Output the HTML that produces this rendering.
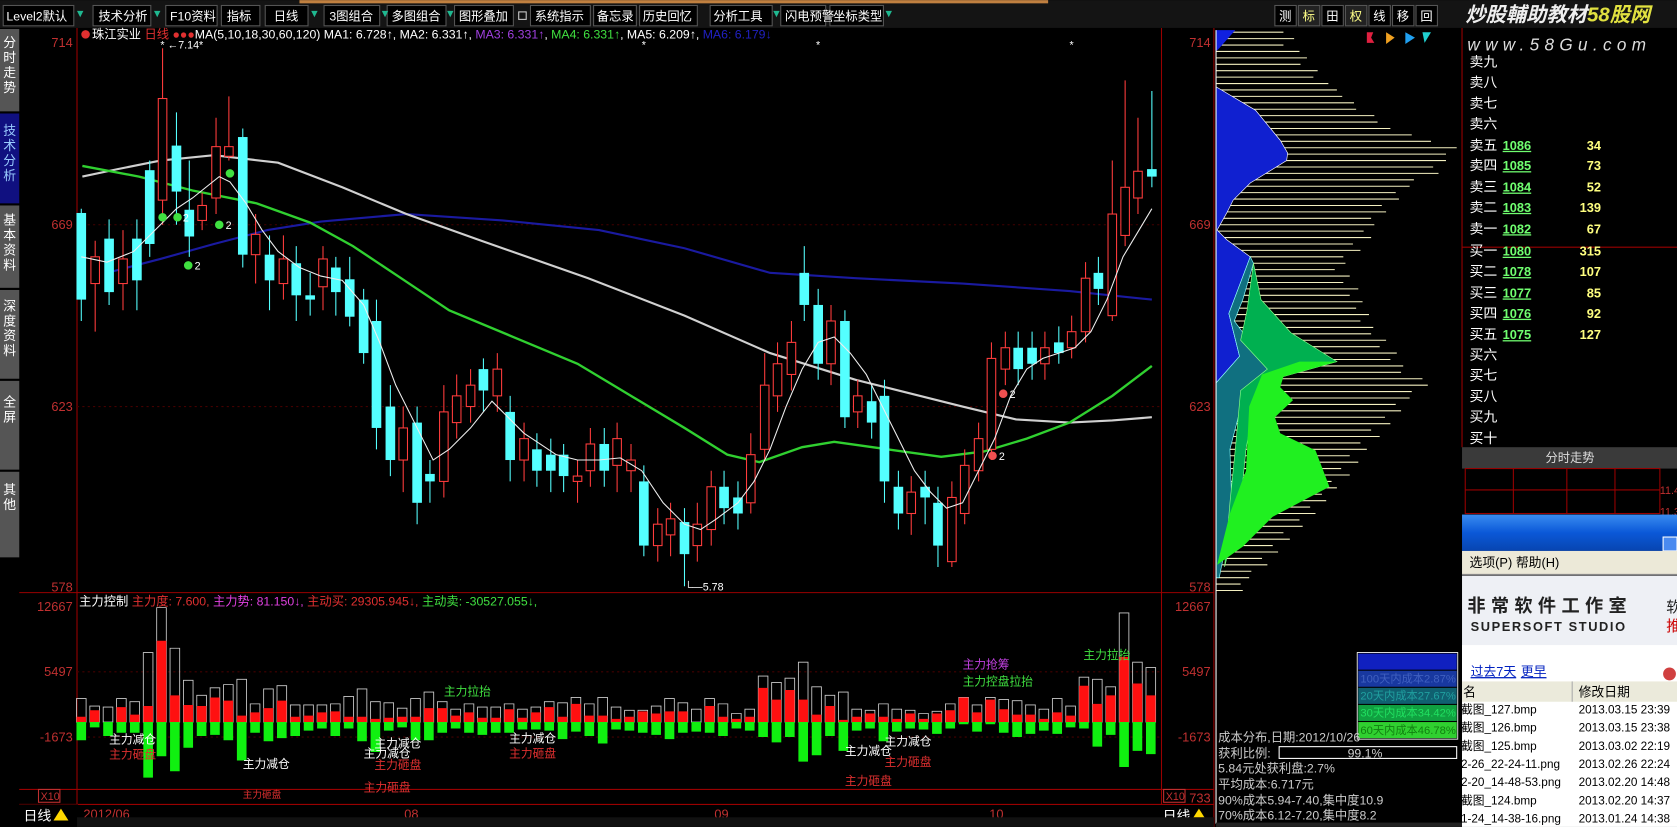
<!DOCTYPE html>
<html><head><meta charset="utf-8"><style>
html,body{margin:0;padding:0;background:#000;overflow:hidden}
svg{display:block}
text{font-family:"Liberation Sans","Noto Sans CJK SC",sans-serif}
.c{fill:#54ffff}.r{fill:#000;stroke:#ff3c3c;stroke-width:1}
.vo{fill:none;stroke:#ccc;stroke-width:0.8}.vr{fill:#ff1010}.vg{fill:#10f010}
</style></head><body>
<svg width="1677" height="827" viewBox="0 0 1568 773" xmlns="http://www.w3.org/2000/svg">
<rect width="1568" height="773" fill="#000"/>
<!-- toolbar -->
<rect x="0" y="0" width="1568" height="26" fill="#141414"/>
<rect x="280" y="0" width="700" height="3" fill="#c08040"/>
<g fill="#000" stroke="#555" stroke-width="1">
<rect x="3" y="5" width="66" height="19"/><rect x="87" y="5" width="54" height="19"/><rect x="155" y="5" width="48" height="19"/>
<rect x="207" y="5" width="36" height="19"/><rect x="248" y="5" width="40" height="19"/><rect x="303" y="5" width="52" height="19"/>
<rect x="362" y="5" width="55" height="19"/><rect x="425" y="5" width="55" height="19"/><rect x="496" y="5" width="56" height="19"/>
<rect x="555" y="5" width="40" height="19"/><rect x="598" y="5" width="54" height="19"/><rect x="664" y="5" width="58" height="19"/>
<rect x="730" y="5" width="42" height="19"/><rect x="776" y="5" width="50" height="19"/>
<rect x="1192" y="5" width="20" height="19"/><rect x="1214" y="5" width="20" height="19" fill="#222"/><rect x="1236" y="5" width="20" height="19"/><rect x="1258" y="5" width="20" height="19" fill="#222"/><rect x="1280" y="5" width="20" height="19"/><rect x="1302" y="5" width="20" height="19"/><rect x="1324" y="5" width="20" height="19"/>
</g>
<g fill="#1fb890"><path d="M72 10h6l-3 6z"/><path d="M144 10h6l-3 6z"/><path d="M291 10h6l-3 6z"/><path d="M357 10h6l-3 6z"/><path d="M418 10h6l-3 6z"/><path d="M723 10h6l-3 6z"/><path d="M828 10h6l-3 6z"/></g>
<g fill="#fff" font-size="11.5">
<text x="6" y="19">Level2默认</text><text x="92" y="19">技术分析</text><text x="159" y="19">F10资料</text><text x="212" y="19">指标</text>
<text x="256" y="19">日线</text><text x="308" y="19">3图组合</text><text x="366" y="19">多图组合</text><text x="429" y="19">图形叠加</text>
<text x="500" y="19">系统指示</text><text x="558" y="19">备忘录</text><text x="601" y="19">历史回忆</text>
<text x="667" y="19">分析工具</text><text x="734" y="19">闪电预警</text><text x="779" y="19">坐标类型</text>
<text x="1196" y="19">测</text><text x="1218" y="19" fill="#ff8">标</text><text x="1240" y="19">田</text><text x="1262" y="19" fill="#ff8">权</text><text x="1284" y="19">线</text><text x="1306" y="19">移</text><text x="1328" y="19">回</text>
</g>
<rect x="485" y="11" width="7" height="7" fill="none" stroke="#ccc"/>
<!-- left tabs -->
<g font-size="12" fill="#fff" text-anchor="middle">
<rect x="0" y="27" width="18" height="77" fill="#555"/><rect x="0" y="106" width="18" height="84" fill="#101080"/><rect x="0" y="192" width="18" height="77" fill="#555"/><rect x="0" y="271" width="18" height="83" fill="#555"/><rect x="0" y="356" width="18" height="83" fill="#555"/><rect x="0" y="441" width="18" height="80" fill="#555"/>
<text x="9" y="44">分</text><text x="9" y="58">时</text><text x="9" y="72">走</text><text x="9" y="86">势</text>
<text x="9" y="126" fill="#9cf">技</text><text x="9" y="140" fill="#9cf">术</text><text x="9" y="154" fill="#9cf">分</text><text x="9" y="168" fill="#9cf">析</text>
<text x="9" y="210">基</text><text x="9" y="224">本</text><text x="9" y="238">资</text><text x="9" y="252">料</text>
<text x="9" y="290">深</text><text x="9" y="304">度</text><text x="9" y="318">资</text><text x="9" y="332">料</text>
<text x="9" y="380">全</text><text x="9" y="394">屏</text>
<text x="9" y="462">其</text><text x="9" y="476">他</text>
</g>
<!-- frame lines -->
<g stroke="#900" stroke-width="1" fill="none">
<line x1="72" y1="26" x2="72" y2="752"/><line x1="1086" y1="26" x2="1086" y2="752"/><line x1="1135" y1="26" x2="1135" y2="773"/>
<line x1="18" y1="554" x2="1135" y2="554"/><line x1="18" y1="738" x2="1135" y2="738"/><line x1="18" y1="752" x2="1135" y2="752"/>
<line x1="1367" y1="26" x2="1367" y2="418"/><line x1="1367" y1="231" x2="1568" y2="231"/>
</g>
<g stroke="#400" stroke-dasharray="2 3"><line x1="72" y1="210" x2="1086" y2="210"/><line x1="72" y1="380" x2="1086" y2="380"/><line x1="72" y1="628" x2="1086" y2="628"/><line x1="72" y1="689" x2="1086" y2="689"/></g>
<g fill="#c03030" font-size="12" text-anchor="end">
<text x="68" y="44">714</text><text x="68" y="214">669</text><text x="68" y="384">623</text><text x="68" y="553">578</text>
<text x="68" y="571">12667</text><text x="68" y="632">5497</text><text x="68" y="693">-1673</text>
<text x="1132" y="44">714</text><text x="1132" y="214">669</text><text x="1132" y="384">623</text><text x="1132" y="553">578</text>
<text x="1132" y="571">12667</text><text x="1132" y="632">5497</text><text x="1132" y="693">-1673</text><text x="1132" y="750">733</text>
</g>
<rect x="36" y="738" width="20" height="12" fill="none" stroke="#c03030"/><text x="38" y="748" font-size="10" fill="#c03030">X10</text>
<rect x="1088" y="738" width="20" height="12" fill="none" stroke="#c03030"/><text x="1090" y="748" font-size="10" fill="#c03030">X10</text>
<!-- info line -->
<text x="86" y="36" font-size="11.5" fill="#fff">珠江实业 <tspan fill="#e03030">日线</tspan> <tspan fill="#e03030">●●●</tspan>MA(5,10,18,30,60,120) MA1: 6.728↑, MA2: 6.331↑, <tspan fill="#a040e0">MA3: 6.331↑</tspan>, <tspan fill="#40e040">MA4: 6.331↑</tspan>, MA5: 6.209↑, <tspan fill="#2020c0">MA6: 6.179↓</tspan></text>
<circle cx="80" cy="32" r="4" fill="#e03030"/>
<text x="150" y="45" font-size="10" fill="#fff">*  ←7.14*</text>
<text x="600" y="45" font-size="10" fill="#fff">*</text><text x="763" y="45" font-size="10" fill="#fff">*</text><text x="1000" y="45" font-size="10" fill="#fff">*</text>
<text x="640" y="552" font-size="10" fill="#fff">└—5.78</text>

<!-- MA lines -->
<g fill="none">
<polyline stroke="#1a1aa0" stroke-width="2" points="100,255 150,242 200,228 250,215 300,207 380,200 470,206 560,215 640,232 720,255 800,260 900,265 1000,272 1077,280"/>
<polyline stroke="#d0d0d0" stroke-width="2" points="77,165 110,158 150,150 200,145 260,152 320,175 380,200 450,225 550,260 640,295 720,330 800,355 900,380 950,392 1000,395 1040,393 1077,390"/>
<polyline stroke="#30d030" stroke-width="2.2" points="77,155 130,165 180,178 240,190 290,208 330,230 375,260 420,290 480,315 540,340 590,370 640,400 680,425 710,432 750,418 780,413 830,420 880,427 920,422 960,410 1000,395 1040,370 1077,342"/>
</g>
<!-- wicks -->
<path stroke="#54ffff" stroke-width="1" fill="none" d="M76 195V300M102 205V285M128 205V290M140 150V240M165 105V210M177 150V240M227 120V250M252 220V290M277 230V300M290 255V295M314 240V295M327 240V305M340 270V340M352 280V420M365 360V445M390 380V490M402 430V470M452 335V385M477 370V450M502 405V455M515 410V460M527 415V460M565 400V455M602 435V520M640 475V548M677 440V490M690 450V495M752 230V300M765 270V355M790 290V400M815 360V410M827 355V470M840 440V495M865 440V490M877 455V530M952 310V360M965 310V355M990 305V340M1027 240V285M1077 85V175"/>
<path stroke="#ff3c3c" stroke-width="1" fill="none" d="M89 225V310M115 215V290M152 45V210M189 180V215M202 110V200M214 90V150M239 200V265M265 220V280M302 230V290M377 380V460M415 360V465M427 350V410M440 345V395M465 330V385M490 395V450M540 430V470M552 400V455M577 395V460M590 415V460M615 475V525M627 470V520M652 470V525M665 440V510M702 405V480M715 330V430M727 320V385M740 300V365M777 285V360M802 355V400M852 445V500M890 450V530M902 420V490M915 395V450M927 320V430M940 310V360M977 310V355M1002 295V335M1015 245V320M1040 150V300M1052 75V230M1064 110V200"/>
<!-- cyan bodies -->
<g class="c">
<rect x="71.5" y="199" width="9" height="81"/><rect x="97.5" y="223" width="9" height="50"/><rect x="123.5" y="223" width="9" height="39"/><rect x="135.5" y="159" width="9" height="69"/><rect x="160.5" y="136" width="9" height="43"/><rect x="172.5" y="196" width="9" height="25"/><rect x="222.5" y="128" width="9" height="110"/><rect x="247.5" y="238" width="9" height="24"/><rect x="272.5" y="246" width="9" height="30"/><rect x="285.5" y="276" width="9" height="4"/><rect x="309.5" y="250" width="9" height="23"/><rect x="322.5" y="261" width="9" height="35"/><rect x="335.5" y="280" width="9" height="50"/><rect x="347.5" y="300" width="9" height="100"/><rect x="360.5" y="380" width="9" height="50"/><rect x="385.5" y="395" width="9" height="75"/><rect x="397.5" y="443" width="9" height="7"/><rect x="447.5" y="345" width="9" height="20"/><rect x="472.5" y="385" width="9" height="45"/><rect x="497.5" y="420" width="9" height="20"/><rect x="510.5" y="425" width="9" height="15"/><rect x="522.5" y="425" width="9" height="20"/><rect x="560.5" y="415" width="9" height="25"/><rect x="597.5" y="450" width="9" height="60"/><rect x="635.5" y="488" width="9" height="30"/><rect x="672.5" y="455" width="9" height="20"/><rect x="685.5" y="465" width="9" height="15"/><rect x="747.5" y="255" width="9" height="30"/><rect x="760.5" y="285" width="9" height="55"/><rect x="785.5" y="300" width="9" height="90"/><rect x="810.5" y="375" width="9" height="20"/><rect x="822.5" y="370" width="9" height="80"/><rect x="835.5" y="455" width="9" height="25"/><rect x="860.5" y="455" width="9" height="10"/><rect x="872.5" y="470" width="9" height="40"/><rect x="947.5" y="325" width="9" height="20"/><rect x="960.5" y="325" width="9" height="15"/><rect x="985.5" y="320" width="9" height="10"/><rect x="1022.5" y="255" width="9" height="15"/><rect x="1072.5" y="158" width="9" height="7"/>
</g>
<!-- red hollow bodies -->
<g class="r">
<rect x="85" y="240" width="8" height="25"/><rect x="111" y="242" width="8" height="23"/><rect x="148" y="92" width="8" height="95"/><rect x="185" y="192" width="8" height="14"/><rect x="198" y="137" width="8" height="48"/><rect x="210" y="137" width="8" height="9"/><rect x="235" y="219" width="8" height="19"/><rect x="261" y="242" width="8" height="23"/><rect x="298" y="242" width="8" height="26"/><rect x="373" y="400" width="8" height="30"/><rect x="411" y="385" width="8" height="65"/><rect x="423" y="370" width="8" height="25"/><rect x="436" y="360" width="8" height="20"/><rect x="461" y="345" width="8" height="25"/><rect x="486" y="410" width="8" height="20"/><rect x="536" y="445" width="8" height="5"/><rect x="548" y="415" width="8" height="25"/><rect x="573" y="410" width="8" height="25"/><rect x="586" y="430" width="8" height="10"/><rect x="611" y="490" width="8" height="20"/><rect x="623" y="485" width="8" height="15"/><rect x="648" y="490" width="8" height="20"/><rect x="661" y="455" width="8" height="40"/><rect x="698" y="425" width="8" height="45"/><rect x="711" y="360" width="8" height="60"/><rect x="723" y="340" width="8" height="30"/><rect x="736" y="320" width="8" height="30"/><rect x="773" y="300" width="8" height="40"/><rect x="798" y="370" width="8" height="15"/><rect x="848" y="460" width="8" height="20"/><rect x="886" y="465" width="8" height="60"/><rect x="898" y="435" width="8" height="45"/><rect x="911" y="410" width="8" height="30"/><rect x="923" y="335" width="8" height="85"/><rect x="936" y="325" width="8" height="20"/><rect x="973" y="325" width="8" height="15"/><rect x="998" y="310" width="8" height="15"/><rect x="1011" y="260" width="8" height="50"/><rect x="1036" y="200" width="8" height="95"/><rect x="1048" y="175" width="8" height="45"/><rect x="1060" y="160" width="8" height="25"/>
</g>
<!-- MA5 white -->
<polyline fill="none" stroke="#eee" stroke-width="1" points="76,240 100,245 125,235 150,210 165,195 180,185 205,165 215,170 230,190 245,215 260,235 280,250 300,258 320,262 340,285 355,320 370,360 390,400 405,430 420,420 440,400 460,375 475,390 490,405 505,415 520,425 540,430 560,430 580,428 600,440 620,470 640,490 655,495 670,485 690,470 705,450 720,420 735,380 750,345 765,320 780,315 795,330 810,350 825,380 840,410 855,440 870,460 885,475 900,470 915,440 930,410 945,370 960,345 975,335 990,330 1005,325 1020,310 1035,280 1050,240 1065,215 1077,195"/>
<g font-size="10" fill="#fff">
<circle cx="152" cy="203" r="4" fill="#40e040"/><circle cx="166" cy="203" r="4" fill="#40e040"/><text x="171" y="207">2</text>
<circle cx="176" cy="248" r="4" fill="#40e040"/><text x="182" y="252">2</text>
<circle cx="205" cy="210" r="4" fill="#40e040"/><text x="211" y="214">2</text>
<circle cx="215" cy="162" r="4" fill="#40e040"/>
<circle cx="938" cy="368" r="4" fill="#f05050"/><text x="944" y="372">2</text>
<circle cx="928" cy="426" r="4" fill="#f05050"/><text x="934" y="430">2</text>
</g>

<!-- volume header -->
<text x="74" y="566" font-size="11.5" fill="#fff">主力控制 <tspan fill="#e03030">主力度: 7.600,</tspan> <tspan fill="#e040e0">主力势: 81.150↓,</tspan> <tspan fill="#e03030">主动买: 29305.945↓,</tspan> <tspan fill="#40e040">主动卖: -30527.055↓,</tspan></text>
<!-- volume bars: outlines -->
<path class="vo" d="M71.5 653h9v22h-9zM84 660h9v15h-9zM96.5 661h9v14h-9zM109 653h9v22h-9zM121.5 656h9v19h-9zM134 610h9v65h-9zM146.5 568h9v107h-9zM159 606h9v69h-9zM171.5 636h9v39h-9zM184 650h9v25h-9zM196.5 643h9v32h-9zM209 640h9v35h-9zM221.5 635h9v40h-9zM234 658h9v17h-9zM246.5 644h9v31h-9zM259 641h9v34h-9zM271.5 659h9v16h-9zM284 659h9v16h-9zM296.5 659h9v16h-9zM309 658h9v17h-9zM321.5 651h9v24h-9zM334 644h9v31h-9zM346.5 656h9v19h-9zM359 657h9v18h-9zM371.5 662h9v13h-9zM384 653h9v22h-9zM396.5 647h9v28h-9zM409 656h9v19h-9zM421.5 663h9v12h-9zM434 658h9v17h-9zM446.5 661h9v14h-9zM459 661h9v14h-9zM471.5 658h9v17h-9zM484 663h9v12h-9zM496.5 661h9v14h-9zM509 656h9v19h-9zM521.5 657h9v18h-9zM534 652h9v23h-9zM546.5 658h9v17h-9zM559 652h9v23h-9zM571.5 661h9v14h-9zM584 664h9v11h-9zM596.5 664h9v11h-9zM609 660h9v15h-9zM621.5 653h9v22h-9zM634 657h9v18h-9zM646.5 663h9v12h-9zM659 653h9v22h-9zM671.5 658h9v17h-9zM684 667h9v8h-9zM696.5 663h9v12h-9zM709 632h9v43h-9zM721.5 638h9v37h-9zM734 634h9v41h-9zM746.5 619h9v56h-9zM759 642h9v33h-9zM771.5 650h9v25h-9zM784 647h9v28h-9zM796.5 663h9v12h-9zM809 664h9v11h-9zM821.5 658h9v17h-9zM834 663h9v12h-9zM846.5 664h9v11h-9zM859 667h9v8h-9zM871.5 665h9v10h-9zM884 658h9v17h-9zM896.5 652h9v23h-9zM909 659h9v16h-9zM921.5 652h9v23h-9zM934 654h9v21h-9zM946.5 655h9v20h-9zM959 659h9v16h-9zM971.5 663h9v12h-9zM984 653h9v22h-9zM996.5 660h9v15h-9zM1009 633h9v42h-9zM1021.5 635h9v40h-9zM1034 642h9v33h-9zM1046.5 573h9v102h-9zM1059 619h9v56h-9zM1071.5 624h9v51h-9z"/>
<path class="vr" d="M71.5 670h9v5h-9zM84 664h9v11h-9zM109 661h9v14h-9zM121.5 668h9v7h-9zM134 660h9v15h-9zM146.5 599h9v76h-9zM159 650h9v25h-9zM171.5 659h9v16h-9zM184 660h9v15h-9zM196.5 652h9v23h-9zM209 655h9v20h-9zM221.5 669h9v6h-9zM234 666h9v9h-9zM246.5 662h9v13h-9zM259 655h9v20h-9zM271.5 670h9v5h-9zM284 669h9v6h-9zM296.5 666h9v9h-9zM309 665h9v10h-9zM321.5 670h9v5h-9zM334 670h9v5h-9zM346.5 672h9v3h-9zM359 671h9v4h-9zM371.5 670h9v5h-9zM384 670h9v5h-9zM396.5 662h9v13h-9zM409 662h9v13h-9zM421.5 669h9v6h-9zM434 666h9v9h-9zM446.5 671h9v4h-9zM459 671h9v4h-9zM471.5 663h9v12h-9zM484 671h9v4h-9zM496.5 666h9v9h-9zM509 661h9v14h-9zM521.5 670h9v5h-9zM534 658h9v17h-9zM546.5 669h9v6h-9zM559 669h9v6h-9zM571.5 672h9v3h-9zM584 670h9v5h-9zM596.5 665h9v10h-9zM609 667h9v8h-9zM621.5 665h9v10h-9zM634 665h9v10h-9zM659 660h9v15h-9zM671.5 670h9v5h-9zM684 672h9v3h-9zM696.5 670h9v5h-9zM709 643h9v32h-9zM721.5 654h9v21h-9zM734 645h9v30h-9zM746.5 654h9v21h-9zM759 668h9v7h-9zM771.5 660h9v15h-9zM784 673h9v2h-9zM796.5 670h9v5h-9zM809 667h9v8h-9zM821.5 670h9v5h-9zM834 672h9v3h-9zM846.5 667h9v8h-9zM859 672h9v3h-9zM871.5 667h9v8h-9zM884 664h9v11h-9zM896.5 652h9v23h-9zM909 666h9v9h-9zM921.5 654h9v21h-9zM934 663h9v12h-9zM946.5 668h9v7h-9zM959 668h9v7h-9zM971.5 672h9v3h-9zM984 666h9v9h-9zM996.5 669h9v6h-9zM1009 641h9v34h-9zM1021.5 658h9v17h-9zM1034 650h9v25h-9zM1046.5 614h9v61h-9zM1059 639h9v36h-9zM1071.5 650h9v25h-9z"/>
<path class="vg" d="M71.5 675h9v17h-9zM84 675h9v5h-9zM96.5 675h9v13h-9zM109 675h9v10h-9zM121.5 675h9v10h-9zM134 675h9v52h-9zM146.5 675h9v32h-9zM159 675h9v46h-9zM171.5 675h9v24h-9zM184 675h9v13h-9zM196.5 675h9v12h-9zM209 675h9v17h-9zM221.5 675h9v36h-9zM234 675h9v10h-9zM246.5 675h9v18h-9zM259 675h9v15h-9zM271.5 675h9v13h-9zM284 675h9v8h-9zM296.5 675h9v6h-9zM309 675h9v13h-9zM321.5 675h9v6h-9zM334 675h9v18h-9zM346.5 675h9v28h-9zM359 675h9v8h-9zM371.5 675h9v5h-9zM384 675h9v17h-9zM396.5 675h9v17h-9zM409 675h9v10h-9zM421.5 675h9v6h-9zM434 675h9v10h-9zM446.5 675h9v12h-9zM459 675h9v10h-9zM471.5 675h9v10h-9zM484 675h9v7h-9zM496.5 675h9v7h-9zM509 675h9v8h-9zM521.5 675h9v16h-9zM534 675h9v9h-9zM546.5 675h9v13h-9zM559 675h9v20h-9zM571.5 675h9v7h-9zM584 675h9v8h-9zM596.5 675h9v10h-9zM609 675h9v12h-9zM621.5 675h9v16h-9zM634 675h9v10h-9zM646.5 675h9v9h-9zM659 675h9v10h-9zM671.5 675h9v13h-9zM684 675h9v6h-9zM696.5 675h9v8h-9zM709 675h9v14h-9zM721.5 675h9v19h-9zM734 675h9v14h-9zM746.5 675h9v37h-9zM759 675h9v31h-9zM771.5 675h9v13h-9zM784 675h9v27h-9zM796.5 675h9v8h-9zM809 675h9v6h-9zM821.5 675h9v18h-9zM834 675h9v9h-9zM846.5 675h9v6h-9zM859 675h9v7h-9zM871.5 675h9v11h-9zM884 675h9v6h-9zM896.5 675h9v2h-9zM909 675h9v9h-9zM921.5 675h9v2h-9zM934 675h9v10h-9zM946.5 675h9v14h-9zM959 675h9v11h-9zM971.5 675h9v8h-9zM984 675h9v11h-9zM996.5 675h9v5h-9zM1009 675h9v6h-9zM1021.5 675h9v23h-9zM1034 675h9v12h-9zM1046.5 675h9v42h-9zM1059 675h9v27h-9zM1071.5 675h9v30h-9z"/>
<g font-size="11">
<text x="102" y="695" fill="#fff">主力减仓</text><text x="102" y="709" fill="#e03030">主力砸盘</text>
<text x="227" y="746" fill="#e03030" font-size="9">主力砸盘</text>
<text x="227" y="718" fill="#fff">主力减仓</text>
<text x="350" y="699" fill="#fff">主力减仓</text><text x="340" y="708" fill="#fff">主力减仓</text><text x="350" y="719" fill="#e03030">主力砸盘</text><text x="340" y="740" fill="#e03030">主力砸盘</text>
<text x="415" y="650" fill="#40e040">主力拉抬</text>
<text x="476" y="694" fill="#fff">主力减仓</text><text x="476" y="708" fill="#e03030">主力砸盘</text>
<text x="827" y="697" fill="#fff">主力减仓</text><text x="790" y="706" fill="#fff">主力减仓</text><text x="827" y="716" fill="#e03030">主力砸盘</text><text x="790" y="734" fill="#e03030">主力砸盘</text>
<text x="900" y="625" fill="#c040e0">主力抢筹</text><text x="900" y="641" fill="#40e040">主力控盘拉抬</text>
<text x="1013" y="616" fill="#40e040">主力拉抬</text>
</g>
<!-- date axis -->
<g font-size="12" fill="#c03030"><text x="78" y="765">2012/06</text><text x="378" y="765">08</text><text x="668" y="765">09</text><text x="925" y="765">10</text></g>
<rect x="18" y="752" width="55" height="21" fill="#000"/>
<text x="22" y="767" font-size="13" fill="#fff">日线</text><path d="M50 767l7-11 7 11z" fill="#ffd800"/>
<text x="1087" y="767" font-size="13" fill="#fff">日线</text><path d="M1114 767l7-11 7 11z" fill="#ffd800"/>
<rect x="72" y="764" width="1063" height="9" fill="#111"/>

<!-- chip distribution lines -->
<path stroke="#f4f0c0" stroke-width="1" fill="none" d="M1137 30H1200M1137 36H1210M1137 42H1200M1137 48H1215M1137 54H1222M1137 60H1216M1137 66H1232M1137 72H1228M1137 78H1242M1137 84H1250M1137 90H1255M1137 96H1266M1137 102H1268M1137 108H1285M1137 114H1288M1137 120H1300M1137 126H1320M1137 132H1338M1137 138H1362M1137 144H1352M1137 150H1352M1137 156H1340M1137 162H1345M1137 168H1322M1137 174H1318M1137 180H1305M1137 186H1308M1137 192H1292M1137 198H1296M1137 204H1282M1137 210H1285M1137 216H1275M1137 222H1282M1137 228H1265M1137 234H1272M1137 240H1256M1137 246H1258M1137 252H1248M1137 258H1262M1137 264H1256M1137 270H1270M1137 276H1262M1137 282H1274M1137 288H1268M1137 294H1280M1137 300H1272M1137 306H1284M1137 312H1282M1137 318H1296M1137 324H1290M1137 330H1306M1137 336H1300M1137 342H1312M1137 348H1310M1137 354H1330M1137 360H1335M1137 366H1320M1137 372H1318M1137 378H1305M1137 384H1310M1137 390H1295M1137 396H1300M1137 402H1282M1137 408H1290M1137 414H1272M1137 420H1278M1137 426H1262M1137 432H1270M1137 438H1254M1137 444H1262M1137 450H1245M1137 456H1250M1137 462H1236M1137 468H1240M1137 474H1225M1137 480H1230M1137 486H1215M1137 492H1218M1137 498H1200M1137 504H1206M1137 510H1190M1137 516H1195M1137 522H1180M1137 528H1185M1137 534H1170M1137 540H1168M1137 546H1160M1137 552H1162"/>
<path d="M1137 28 L1155 28 1140 45 1137 48Z" fill="#1020e0"/>
<path d="M1137 81 L1174 103 1197 131 1204 143 1203 150 1169 171 1153 187 1147 199 1138 215 1147 224 1169 240 1149 293 1159 333 1137 358Z" fill="#1020d0" stroke="#fff" stroke-width="0.6"/>
<path d="M1169 240 L1172 246 1162 280 1154 300 1175 328 1195 345 1165 362 1150 420 1152 480 1140 540 1137 540 1137 358 1159 333 1149 293Z" fill="#107080" stroke="#8ff" stroke-width="0.6"/>
<path d="M1172 246 L1179 280 1207 311 1250 338 1200 352 1175 365 1165 420 1160 470 1145 530 1150 470 1155 420 1160 365 1185 345 1160 318 1166 290Z" fill="#00b050" stroke="#8f8" stroke-width="0.6"/>
<path d="M1180 350 L1215 338 1250 338 1200 352 1197 362 1209 374 1192 390 1197 405 1230 421 1243 455 1190 483 1162 511 1138 528 1150 480 1165 440 1168 380Z" fill="#20f020"/>
<line x1="1137" y1="28" x2="1137" y2="770" stroke="#fff"/>
<rect x="1270" y="611" width="92" height="15" fill="#1020c0"/>
<rect x="1270" y="627" width="92" height="15" fill="#1838a0"/><rect x="1270" y="643" width="92" height="15" fill="#106070"/><rect x="1270" y="659" width="92" height="15" fill="#10a040"/><rect x="1270" y="675" width="92" height="15" fill="#30d030"/>
<rect x="1269" y="610" width="94" height="81" fill="none" stroke="#fff" stroke-width="0.8"/>
<g font-size="10.5"><text x="1272" y="638" fill="#4060c0">100天内成本2.87%</text><text x="1272" y="654" fill="#20a0a0">20天内成本27.67%</text><text x="1272" y="670" fill="#20e060">30天内成本34.42%</text><text x="1272" y="686" fill="#108010">60天内成本46.78%</text></g>
<g font-size="11.5" fill="#ccc">
<text x="1139" y="693">成本分布,日期:2012/10/26</text>
<text x="1139" y="708">获利比例:</text><rect x="1196" y="698" width="166" height="11" fill="none" stroke="#fff"/><text x="1260" y="708">99.1%</text>
<text x="1139" y="722">5.84元处获利盘:2.7%</text><text x="1139" y="737">平均成本:6.717元</text>
<text x="1139" y="752">90%成本5.94-7.40,集中度10.9</text><text x="1139" y="766">70%成本6.12-7.20,集中度8.2</text>
</g>
<rect x="1137" y="769" width="230" height="4" fill="#222"/>
<!-- right panel -->
<text x="1370" y="20" font-size="19" font-style="italic" font-weight="bold" fill="#eee">炒股輔助教材<tspan fill="#e0e040">58股网</tspan></text>
<text x="1372" y="47" font-size="16" font-style="italic" fill="#ddd" letter-spacing="5">www.58Gu.com</text>
<path d="M1278 30h6l-2 5 3 5h-7z" fill="#e02040"/><path d="M1296 30l8 5-8 6z" fill="#f0a020"/><path d="M1314 30l9 5-9 6z" fill="#20a0f0"/><path d="M1330 30h8l-6 10z" fill="#20d0d0"/>
<g font-size="13" fill="#fff">
<text x="1374" y="62">卖九</text><text x="1374" y="81">卖八</text><text x="1374" y="101">卖七</text><text x="1374" y="120">卖六</text><text x="1374" y="140">卖五</text><text x="1374" y="159">卖四</text><text x="1374" y="179">卖三</text><text x="1374" y="198">卖二</text><text x="1374" y="218">卖一</text>
<text x="1374" y="239">买一</text><text x="1374" y="258">买二</text><text x="1374" y="278">买三</text><text x="1374" y="297">买四</text><text x="1374" y="317">买五</text><text x="1374" y="336">买六</text><text x="1374" y="355">买七</text><text x="1374" y="375">买八</text><text x="1374" y="394">买九</text><text x="1374" y="414">买十</text>
</g>
<g font-size="12" font-weight="bold" fill="#70ff70" text-decoration="underline">
<text x="1405" y="140">1086</text><text x="1405" y="159">1085</text><text x="1405" y="179">1084</text><text x="1405" y="198">1083</text><text x="1405" y="218">1082</text>
<text x="1405" y="239">1080</text><text x="1405" y="258">1078</text><text x="1405" y="278">1077</text><text x="1405" y="297">1076</text><text x="1405" y="317">1075</text>
</g>
<g font-size="12" font-weight="bold" fill="#ffff80" text-anchor="end">
<text x="1497" y="140">34</text><text x="1497" y="159">73</text><text x="1497" y="179">52</text><text x="1497" y="198">139</text><text x="1497" y="218">67</text>
<text x="1497" y="239">315</text><text x="1497" y="258">107</text><text x="1497" y="278">85</text><text x="1497" y="297">92</text><text x="1497" y="317">127</text>
</g>
<rect x="1367" y="418" width="201" height="20" fill="#3a3a3a"/><text x="1445" y="432" font-size="11.5" fill="#ddd">分时走势</text>
<g stroke="#900" fill="none"><rect x="1370" y="438" width="182" height="42"/><line x1="1415" y1="438" x2="1415" y2="480"/><line x1="1465" y1="438" x2="1465" y2="480"/><line x1="1510" y1="438" x2="1510" y2="480"/><line x1="1370" y1="458" x2="1552" y2="458"/></g>
<g font-size="10" fill="#c03030"><text x="1552" y="462">11.47</text><text x="1552" y="482">11.39</text></g>
<defs><linearGradient id="xp" x1="0" y1="0" x2="0" y2="1"><stop offset="0" stop-color="#3a8cf0"/><stop offset="0.5" stop-color="#0a58d8"/><stop offset="1" stop-color="#0845b0"/></linearGradient></defs>
<rect x="1367" y="481" width="201" height="34" fill="url(#xp)"/><rect x="1555" y="502" width="13" height="13" fill="#4a8af0" stroke="#fff"/>
<rect x="1367" y="515" width="201" height="22" fill="#ece9d8"/><line x1="1367" y1="537" x2="1568" y2="537" stroke="#888"/>
<text x="1374" y="530" font-size="12" fill="#000">选项(P)   帮助(H)</text>
<rect x="1367" y="538" width="201" height="235" fill="#eef0f5"/>
<text x="1372" y="572" font-size="17" font-weight="bold" fill="#222" letter-spacing="5">非常软件工作室</text>
<text x="1375" y="590" font-size="12" font-weight="bold" fill="#222" letter-spacing="1.5">SUPERSOFT STUDIO</text>
<text x="1558" y="572" font-size="14" fill="#222">软</text><text x="1558" y="590" font-size="14" fill="#c00">推</text>
<rect x="1367" y="603" width="201" height="170" fill="#fff"/>
<text x="1375" y="632" font-size="12" fill="#0020c0" text-decoration="underline">过去7天</text><text x="1422" y="632" font-size="12" fill="#0020c0" text-decoration="underline">更早</text>
<circle cx="1561" cy="630" r="6" fill="#d04040"/>
<rect x="1367" y="637" width="201" height="19" fill="#ebeadb"/><line x1="1470" y1="637" x2="1470" y2="656" stroke="#aaa"/>
<text x="1368" y="651" font-size="12" fill="#000">名</text><text x="1476" y="651" font-size="12" fill="#000">修改日期</text>
<g font-size="11" fill="#000">
<text x="1366" y="667">截图_127.bmp</text><text x="1476" y="667">2013.03.15 23:39</text>
<text x="1366" y="684">截图_126.bmp</text><text x="1476" y="684">2013.03.15 23:38</text>
<text x="1366" y="701">截图_125.bmp</text><text x="1476" y="701">2013.03.02 22:19</text>
<text x="1366" y="718">2-26_22-24-11.png</text><text x="1476" y="718">2013.02.26 22:24</text>
<text x="1366" y="735">2-20_14-48-53.png</text><text x="1476" y="735">2013.02.20 14:48</text>
<text x="1366" y="752">截图_124.bmp</text><text x="1476" y="752">2013.02.20 14:37</text>
<text x="1366" y="769">1-24_14-38-16.png</text><text x="1476" y="769">2013.01.24 14:38</text>
</g>
</svg>
</body></html>
